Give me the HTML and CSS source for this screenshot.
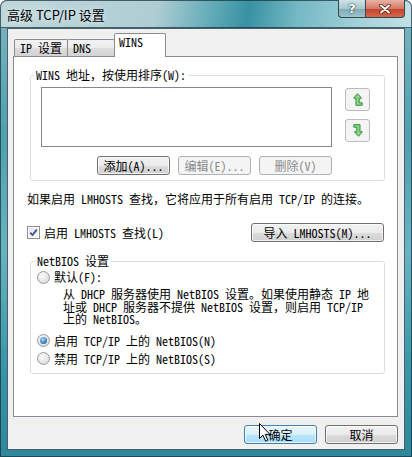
FILE: index.html
```html
<!DOCTYPE html>
<html lang="zh-CN">
<head>
    <meta charset="UTF-8">
    <title>高级 TCP/IP 设置</title>
    <link rel="stylesheet" href="styles.css">
</head>
<body>
    <div class="window">
        <div class="titlebar">
            <span class="title">高级 TCP/IP 设置</span>
            <div class="caption">
                <span class="cap help">?</span>
                <span class="cap close">
                    <svg width="12" height="10" viewBox="0 0 12 10">
                        <path d="M2 1.5 L10 8.5 M10 1.5 L2 8.5" stroke="#4a1c12" stroke-width="3.6" stroke-linecap="round"/>
                        <path d="M2 1.5 L10 8.5 M10 1.5 L2 8.5" stroke="#fff" stroke-width="2" stroke-linecap="round"/>
                    </svg>
                </span>
            </div>
        </div>

        <div class="client">
            <div class="tabs">
                <span class="tab tab-ip">IP 设置</span>
                <span class="tab tab-dns">DNS</span>
                <span class="tab tab-wins active">WINS</span>
            </div>

            <div class="panel">
                <fieldset class="group wins">
                    <legend>WINS 地址，按使用排序(W):</legend>
                    <div class="list-row">
                        <div class="listbox"></div>
                        <div class="order">
                            <button class="icon-btn" type="button">
                                <svg width="10" height="13" viewBox="0 0 10 13">
                                    <path d="M4.5 0.7 L8.6 5.2 H6.2 V9.8 H9.2 V12.3 H3 V5.2 H0.6 Z" fill="#8fd889" stroke="#2f8f3a" stroke-width="1" stroke-linejoin="round"/>
                                </svg>
                            </button>
                            <button class="icon-btn" type="button">
                                <svg width="10" height="13" viewBox="0 0 10 13">
                                    <path d="M5.5 12.3 L1.4 7.8 H3.8 V3.2 H0.8 V0.7 H7 V7.8 H9.4 Z" fill="#8fd889" stroke="#2f8f3a" stroke-width="1" stroke-linejoin="round"/>
                                </svg>
                            </button>
                        </div>
                    </div>
                    <div class="btn-row">
                        <button class="btn" type="button">添加(A)...</button>
                        <button class="btn" type="button" disabled>编辑(E)...</button>
                        <button class="btn" type="button" disabled>删除(V)</button>
                    </div>
                </fieldset>

                <p class="note">如果启用 LMHOSTS 查找，它将应用于所有启用 TCP/IP 的连接。</p>

                <div class="lmhosts-row">
                    <label class="check">
                        <span class="checkbox">
                            <svg width="9" height="9" viewBox="0 0 9 9">
                                <path d="M1.2 4.6 L3.5 7 L7.8 1.6" fill="none" stroke="#3a4f8c" stroke-width="1.8"/>
                            </svg>
                        </span>
                        启用 LMHOSTS 查找(L)
                    </label>
                    <button class="btn import" type="button">导入 LMHOSTS(M)...</button>
                </div>

                <fieldset class="group netbios">
                    <legend>NetBIOS 设置</legend>
                    <label class="radio"><span class="radio-dot"></span>默认(F):</label>
                    <p class="desc">从 DHCP 服务器使用 NetBIOS 设置。如果使用静态 IP 地<br>址或 DHCP 服务器不提供 NetBIOS 设置，则启用 TCP/IP<br>上的 NetBIOS。</p>
                    <label class="radio second"><span class="radio-dot checked"></span>启用 TCP/IP 上的 NetBIOS(N)</label>
                    <label class="radio third"><span class="radio-dot"></span>禁用 TCP/IP 上的 NetBIOS(S)</label>
                </fieldset>
            </div>

            <div class="footer">
                <button class="btn default" type="button">确定</button>
                <button class="btn" type="button">取消</button>
            </div>
        </div>

        <svg class="cursor" width="12" height="19" viewBox="0 0 12 19">
            <path d="M0.5 0.5 V15.5 L4 12.2 L6.6 18.2 L8.8 17.2 L6.3 11.4 H11 Z" fill="#fff" stroke="#000" stroke-width="1" stroke-linejoin="round"/>
        </svg>
    </div>
</body>
</html>
```

FILE: styles.css
```css
* {
    box-sizing: border-box;
}
body {
    margin: 0;
    font-family: "Noto Sans Mono CJK SC", "Noto Sans CJK SC", monospace;
    font-size: 12px;
    color: #000;
    background: #fff;
}
.window {
    position: relative;
    width: 412px;
    height: 457px;
    border-radius: 7px 7px 0 0;
    background: linear-gradient(to bottom, #7fb6c1 0%, #4f9fae 30%, #6ab3c0 55%, #3a95a6 80%, #2f8799 100%);
    box-shadow: inset 0 0 0 1px rgba(20, 45, 55, 0.7);
    overflow: hidden;
}
.titlebar {
    height: 28px;
    display: flex;
    align-items: flex-start;
    padding: 0 7px;
    border-radius: 7px 7px 0 0;
    background: linear-gradient(100deg, #c0d8dc 0%, #aecdd3 38%, #5fa9b6 52%, #3891a2 60%, #74b9c4 72%, #a6d2d9 88%, #c2e1e6 100%);
    box-shadow: inset 0 0 0 1px rgba(20, 45, 55, 0.7);
}
.title {
    font-family: "Noto Sans CJK SC", sans-serif;
    font-size: 13px;
    line-height: 18px;
    margin-top: 6px;
    text-shadow: 0 0 6px rgba(255, 255, 255, 0.9);
}
.caption {
    margin-left: auto;
    display: flex;
}
.cap {
    height: 18px;
    display: flex;
    align-items: center;
    justify-content: center;
    border: 1px solid #33474e;
    border-top: none;
}
.help {
    width: 27px;
    border-right: none;
    border-radius: 0 0 0 4px;
    background: linear-gradient(#cfe3e7 0%, #a9c8ce 50%, #7fa9b2 51%, #9cc4cb 100%);
    color: #fff;
    font-family: "DejaVu Sans", sans-serif;
    font-weight: bold;
    font-size: 13px;
    text-shadow: 0 0 2px #1d3540, 0 0 1px #1d3540;
}
.close {
    width: 40px;
    border-radius: 0 0 4px 0;
    background: linear-gradient(#e8b1a6 0%, #d67a66 50%, #c1432a 51%, #d5674c 100%);
}
.client {
    margin: 0 7px;
    height: 422px;
    background: #f0f0f0;
    border: 1px solid #45626c;
    display: flex;
    flex-direction: column;
}
.tabs {
    display: flex;
    align-items: flex-end;
    height: 27px;
    padding-left: 6px;
}
.tab {
    height: 17px;
    line-height: 15px;
    padding-left: 5px;
    border: 1px solid #898c95;
    border-bottom: none;
    border-radius: 2px 2px 0 0;
    background: linear-gradient(#f2f2f2, #ebebeb 50%, #dddddd 50%, #d3d3d3);
    white-space: nowrap;
}
.tab-ip {
    width: 54px;
}
.tab-dns {
    width: 48px;
    margin-left: -1px;
}
.tab-wins {
    width: 52px;
    margin-left: -1px;
}
.tab.active {
    position: relative;
    z-index: 1;
    height: 24px;
    line-height: 14px;
    padding-top: 1px;
    padding-left: 4px;
    margin-bottom: -1px;
    background: #fff;
}
.panel {
    margin-left: 5px;
    width: 385px;
    height: 361px;
    background: #fff;
    border: 1px solid #898c95;
    padding: 0 12px 0 13px;
    display: flex;
    flex-direction: column;
    align-items: flex-start;
}
.group {
    width: 355px;
    margin: 0 0 0 3px;
    border: 1px solid #d5dfe5;
    border-radius: 3px;
    min-width: 0;
}
.group legend {
    padding: 0 2px;
    line-height: 14px;
}
.wins {
    margin-top: 11px;
    padding: 5px 13px 5px 10px;
}
.wins legend {
    margin-left: -7px;
}
.list-row {
    display: flex;
    align-items: flex-start;
}
.listbox {
    width: 291px;
    height: 60px;
    border: 1px solid #828790;
    background: #fff;
}
.order {
    margin-left: 13px;
    margin-top: 1px;
    display: flex;
    flex-direction: column;
    gap: 8px;
}
.icon-btn {
    width: 25px;
    height: 23px;
    padding: 0;
    display: flex;
    align-items: center;
    justify-content: center;
    border: 1px solid #b9bcc0;
    border-radius: 3px;
    background: #f4f4f4;
}
.btn-row {
    display: flex;
    justify-content: flex-end;
    gap: 8px;
    margin-top: 9px;
    padding-right: 39px;
}
.btn {
    width: 73px;
    height: 19px;
    padding: 0;
    font-family: inherit;
    font-size: 12px;
    line-height: 17px;
    color: #000;
    border: 1px solid #707070;
    border-radius: 3px;
    background: linear-gradient(#f2f2f2, #ebebeb 50%, #dddddd 50%, #cfcfcf);
    box-shadow: inset 0 0 0 1px rgba(255, 255, 255, 0.7);
}
.btn:disabled {
    color: #8a8a8a;
    border-color: #adb2b5;
    background: #f4f4f4;
    box-shadow: none;
}
.btn.default {
    border-color: #3c7fb1;
    background: linear-gradient(#eaf6fd, #d9f0fc 50%, #bee6fd 50%, #a9dbf6);
}
.note {
    margin: 11px 0 0;
    line-height: 14px;
    white-space: nowrap;
}
.lmhosts-row {
    width: 357px;
    margin-top: 17px;
    display: flex;
    align-items: center;
    justify-content: space-between;
}
.check {
    display: flex;
    align-items: center;
    gap: 4px;
    line-height: 14px;
}
.checkbox {
    width: 13px;
    height: 13px;
    display: flex;
    align-items: center;
    justify-content: center;
    border: 1px solid #8f8f8f;
    background: linear-gradient(135deg, #dfe3ea, #f7f8fa);
    box-shadow: inset 0 0 0 1px #fff;
}
.btn.import {
    width: 133px;
}
.netbios {
    margin-top: 12px;
    padding: 2px 8px 7px 6px;
}
.netbios legend {
    margin-left: -2px;
}
.radio {
    display: flex;
    align-items: center;
    gap: 4px;
    height: 14px;
    line-height: 14px;
}
.radio-dot {
    width: 13px;
    height: 13px;
    border-radius: 50%;
    border: 1px solid #9a9a9a;
    background: radial-gradient(circle at 40% 35%, #fbfbfb, #d2d4d6);
    display: flex;
    align-items: center;
    justify-content: center;
}
.radio-dot.checked::after {
    content: '';
    width: 7px;
    height: 7px;
    border-radius: 50%;
    background: radial-gradient(circle at 40% 35%, #a8dcfb, #2b6fb8 70%, #1a4f94);
}
.desc {
    margin: 4px 0 0 26px;
    line-height: 12.5px;
    white-space: nowrap;
}
.radio.second {
    margin-top: 8px;
}
.radio.third {
    margin-top: 4px;
}
.footer {
    display: flex;
    justify-content: flex-end;
    gap: 8px;
    margin-top: 8px;
    padding-right: 6px;
}
.cursor {
    position: absolute;
    left: 259px;
    top: 423px;
}
```
